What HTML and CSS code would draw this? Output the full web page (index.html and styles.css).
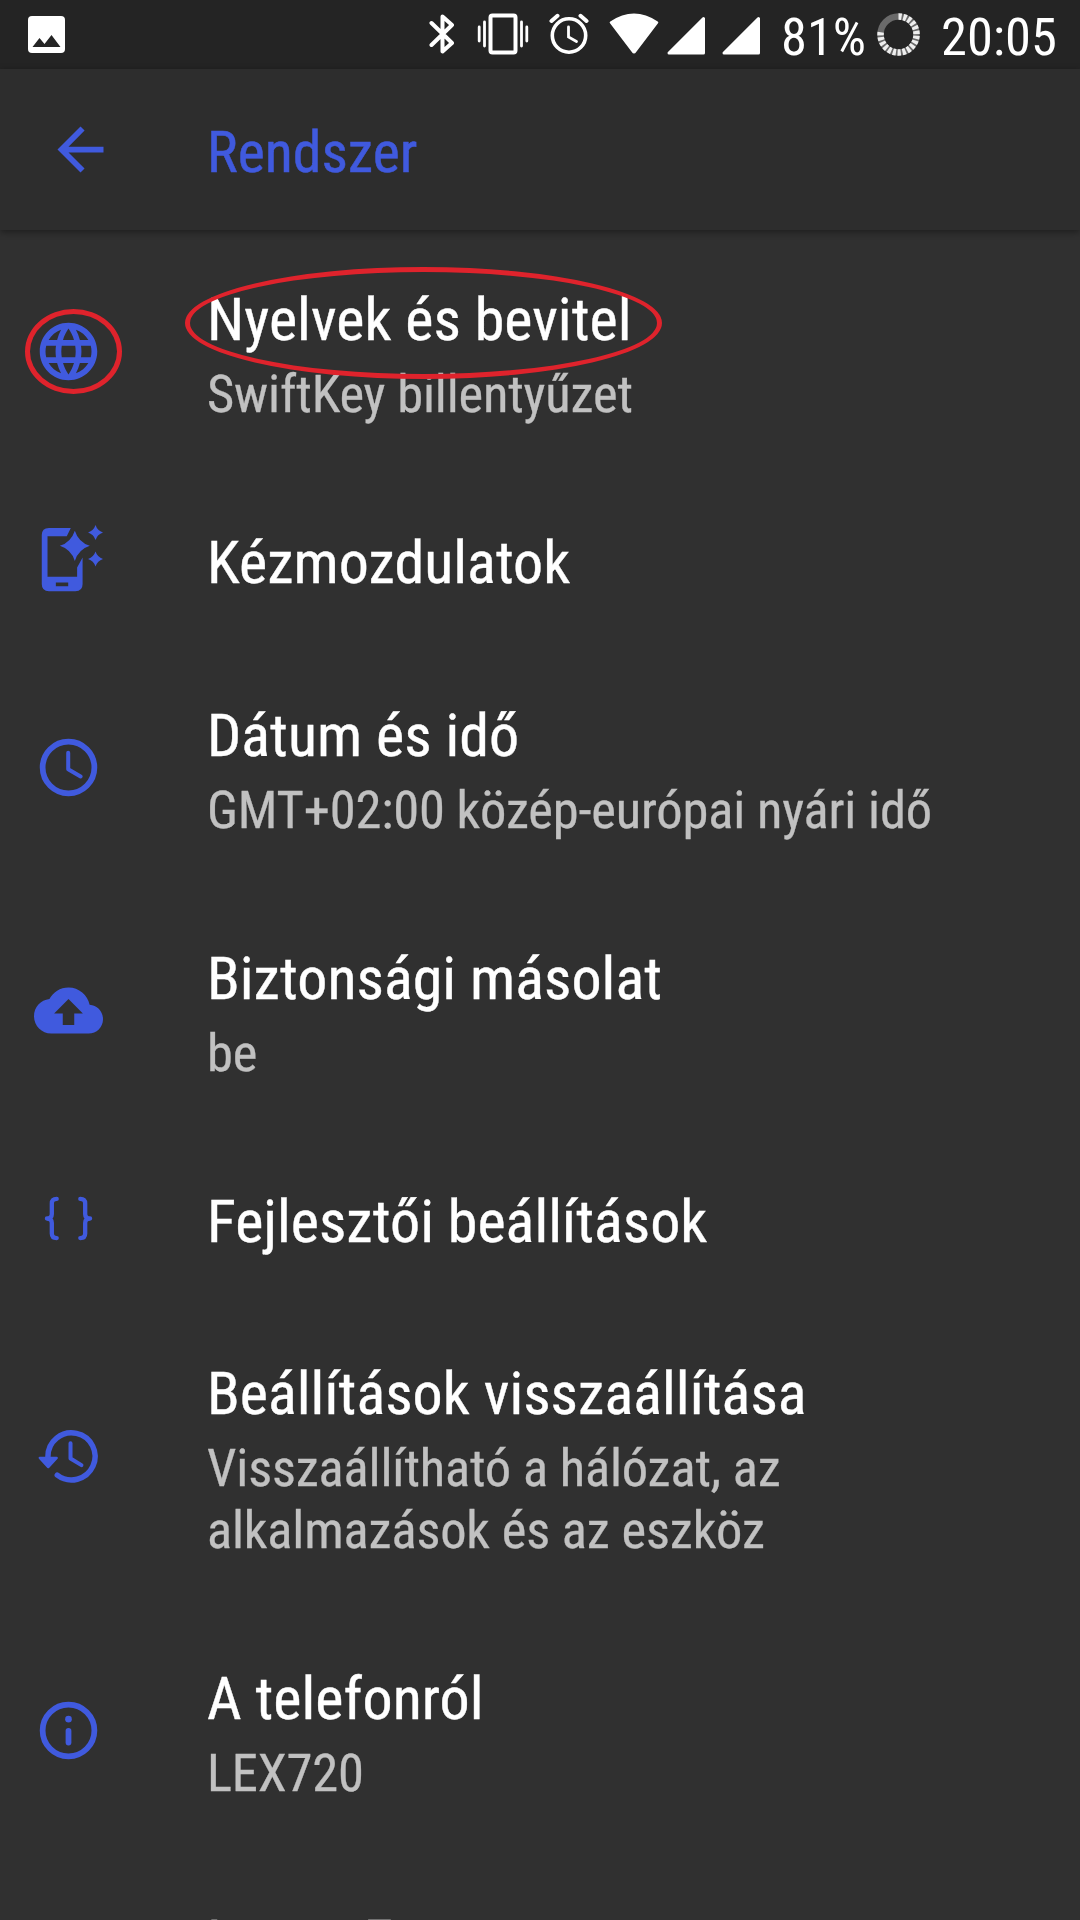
FILE: index.html
```
<!DOCTYPE html>
<html lang="hu">
<head>
  <meta charset="UTF-8" />
  <meta name="viewport" content="width=device-width, initial-scale=1.0"/>
  <title>Rendszer</title>
  <link rel="stylesheet" href="styles.css">
</head>
<body>
  <div class="statusbar">
    <svg class="st-photo" width="37" height="37" viewBox="0 0 37 37">
      <rect width="37" height="37" rx="4" fill="#fff"/>
      <path d="M4.5 31L11.5 22L16.5 28L23.5 19L32.5 31Z" fill="#242424"/>
    </svg>

    <svg class="st-bt" width="26" height="42" viewBox="0 0 26 42" fill="none" stroke="#fff" stroke-width="4" stroke-linejoin="round" stroke-linecap="round">
      <path d="M2.5 10L23 30L13.5 38.5V3.5L23 12L2.5 32"/>
    </svg>
    <svg class="st-vib" width="52" height="42" viewBox="0 0 52 42" fill="none" stroke="#fff" stroke-linecap="round">
      <rect x="13.5" y="2.5" width="25" height="37" rx="2" stroke-width="4"/>
      <path d="M2.2 14V28M7.5 9V33M44.5 9V33M49.8 14V28" stroke-width="2.8"/>
    </svg>
    <svg class="st-alarm" width="40" height="42" viewBox="0 0 40 42" fill="none" stroke="#fff" stroke-linecap="round">
      <circle cx="20" cy="22.5" r="16.7" stroke-width="3.6"/>
      <path d="M2.5 8L8.5 2.8M37.5 8L31.5 2.8" stroke-width="4"/>
      <path d="M19.5 14V24L27.5 28.5" stroke-width="2.8"/>
    </svg>
    <svg class="st-wifi" width="50" height="42" viewBox="0 0 50 42">
      <path d="M2 9.5Q25 -6 48 9.5L26 38.5Q25 40 24 38.5Z" fill="#fff" stroke="#fff" stroke-width="2.5" stroke-linejoin="round"/>
    </svg>
    <svg class="st-sig" width="38" height="42" viewBox="0 0 38 42">
      <path d="M2 40L36.5 5.5V40Z" fill="#fff" stroke="#fff" stroke-width="3" stroke-linejoin="round"/>
    </svg>
    <svg class="st-sig2" width="38" height="42" viewBox="0 0 38 42">
      <path d="M2 40L36.5 5.5V40Z" fill="#fff" stroke="#fff" stroke-width="3" stroke-linejoin="round"/>
    </svg>
    <span class="st-percent">81%</span>
    <svg class="st-batt" width="43" height="43" viewBox="0 0 43 43" fill="none" stroke-width="6.5">
      <circle cx="21.5" cy="21.5" r="18" stroke="#6a6a6a"/>
      <!-- 81% of the ring, clockwise from the top -->
      <path d="M21.5 3.5A18 18 0 1 1 3.8 18.5" stroke="#eee" stroke-dasharray="3.2 1.7"/>
    </svg>
    <span class="st-time">20:05</span>
  </div>

  <div class="header">
    <svg class="back" viewBox="0 0 24 24"><path d="M20 11H7.83l5.59-5.59L12 4l-8 8 8 8 1.41-1.41L7.83 13H20v-2z"/></svg>
    <div class="header-title">Rendszer</div>
  </div>

  <div class="list">
    <div class="row">
      <svg class="icon" viewBox="0 0 24 24"><path d="M11.99 2C6.47 2 2 6.48 2 12s4.47 10 9.99 10C17.52 22 22 17.52 22 12S17.52 2 11.99 2zm6.93 6h-2.95c-.32-1.25-.78-2.45-1.38-3.56 1.84.63 3.37 1.91 4.33 3.56zM12 4.04c.83 1.2 1.48 2.53 1.91 3.96h-3.82c.43-1.43 1.08-2.76 1.91-3.96zM4.26 14C4.1 13.36 4 12.69 4 12s.1-1.36.26-2h3.38c-.08.66-.14 1.32-.14 2 0 .68.06 1.34.14 2H4.26zm.82 2h2.95c.32 1.25.78 2.45 1.38 3.56-1.84-.63-3.37-1.9-4.33-3.56zm2.95-8H5.08c.96-1.66 2.49-2.93 4.33-3.56C8.81 5.55 8.35 6.75 8.03 8zM12 19.96c-.83-1.2-1.48-2.53-1.91-3.96h3.82c-.43 1.43-1.08 2.76-1.91 3.96zM14.34 14H9.66c-.09-.66-.16-1.32-.16-2 0-.68.07-1.35.16-2h4.68c.09.65.16 1.32.16 2 0 .68-.07 1.34-.16 2zm.25 5.56c.6-1.11 1.06-2.31 1.38-3.56h2.95c-.96 1.65-2.49 2.93-4.33 3.56zM16.36 14c.08-.66.14-1.32.14-2 0-.68-.06-1.34-.14-2h3.38c.16.64.26 1.31.26 2s-.1 1.36-.26 2h-3.38z"/></svg>
      <div class="text">
        <div class="title">Nyelvek és bevitel</div>
        <div class="summary">SwiftKey billentyűzet</div>
      </div>
      <div class="mark mark-icon"></div>
      <div class="mark mark-title"></div>
    </div>

    <div class="row">
      <svg class="icon" viewBox="0 0 24 24">
        <path fill-rule="evenodd" d="M12.8 1H5.2Q2.7 1 2.7 3.5V20.5Q2.7 23 5.2 23H14.4Q16.9 23 16.9 20.5V11.3L15 14.8V18H4.7V3.9H11.4ZM7.6 20H11.9V21.3H7.6Z"/>
        <path d="M14.2 2Q15.5 6 19.4 7.25Q15.5 8.5 14.2 12.5Q12.9 8.5 9 7.25Q12.9 6 14.2 2ZM21.4 0Q22.05 1.95 24 2.6Q22.05 3.25 21.4 5.2Q20.75 3.25 18.8 2.6Q20.75 1.95 21.4 0ZM21.4 9.2Q22.05 11.15 24 11.8Q22.05 12.45 21.4 14.4Q20.75 12.45 18.8 11.8Q20.75 11.15 21.4 9.2Z"/>
      </svg>
      <div class="text">
        <div class="title">Kézmozdulatok</div>
      </div>
    </div>

    <div class="row">
      <svg class="icon line" viewBox="0 0 24 24">
        <circle cx="12" cy="12" r="9" stroke-width="2"/>
        <path d="M11.9 6.9V12.6L16.2 15.1" stroke-width="1.4"/>
      </svg>
      <div class="text">
        <div class="title">Dátum és idő</div>
        <div class="summary">GMT+02:00 közép-európai nyári idő</div>
      </div>
    </div>

    <div class="row">
      <svg class="icon" viewBox="0 0 24 24"><path d="M19.35 10.04C18.67 6.59 15.64 4 12 4 9.11 4 6.6 5.64 5.35 8.04 2.34 8.36 0 10.91 0 14c0 3.31 2.69 6 6 6h13c2.76 0 5-2.24 5-5 0-2.64-2.05-4.78-4.65-4.96zM14 13v4h-4v-4H7l5-5 5 5h-3z"/></svg>
      <div class="text">
        <div class="title">Biztonsági másolat</div>
        <div class="summary">be</div>
      </div>
    </div>

    <div class="row">
      <svg class="icon line" viewBox="0 0 24 24">
        <path d="M7.9 5.2C6.7 5.2 6.2 5.8 6.2 6.8V10.4C6.2 11.4 5.6 12 4.5 12C5.6 12 6.2 12.6 6.2 13.6V17.2C6.2 18.2 6.7 18.8 7.9 18.8M16.1 5.2C17.3 5.2 17.8 5.8 17.8 6.8V10.4C17.8 11.4 18.4 12 19.5 12C18.4 12 17.8 12.6 17.8 13.6V17.2C17.8 18.2 17.3 18.8 16.1 18.8" stroke-width="1.5"/>
      </svg>
      <div class="text">
        <div class="title">Fejlesztői beállítások</div>
      </div>
    </div>

    <div class="row">
      <svg class="icon line" viewBox="0 0 24 24">
        <path d="M4.85 12.5V12A8.2 8.2 0 1 1 8.1 18.5" stroke-width="1.9"/>
        <path d="M2 12.5H7.9L4.95 15.7Z" stroke-width=".8" fill="#405ade"/>
        <path d="M12.7 7.4V12.7L16.5 15" stroke-width="1.4"/>
      </svg>
      <div class="text">
        <div class="title">Beállítások visszaállítása</div>
        <div class="summary">Visszaállítható a hálózat, az<br>alkalmazások és az eszköz</div>
      </div>
    </div>

    <div class="row">
      <svg class="icon line" viewBox="0 0 24 24">
        <circle cx="12" cy="12" r="9" stroke-width="2"/>
        <path d="M12 8.05V8.06" stroke-width="2.3"/>
        <path d="M12 12.1V16.2" stroke-width="2"/>
      </svg>
      <div class="text">
        <div class="title">A telefonról</div>
        <div class="summary">LEX720</div>
      </div>
    </div>

    <div class="row">
      <div class="icon"></div>
      <div class="text">
        <div class="title">Leeco F</div>
      </div>
    </div>
  </div>
</body>
</html>
```
FILE: styles.css
```
* {
  box-sizing: border-box;
}

body {
  margin: 0;
  width: 1080px;
  height: 1920px;
  overflow: hidden;
  background: #303030;
  color: #fff;
  font-family: "Roboto Condensed", Roboto, sans-serif;
  font-stretch: 75%;
}

svg {
  display: block;
  flex: none;
}

/* Status bar */
.statusbar {
  display: flex;
  align-items: flex-start;
  height: 69px;
  padding: 13px 0 0 28px;
  background: #242424;
  font-size: 52.5px;
  line-height: 48px;
}

.st-photo {
  margin-top: 3px;
}

.st-bt {
  margin-left: 364px;
}

.st-vib {
  margin-left: 22px;
}

.st-alarm {
  margin-left: 20px;
}

.st-wifi {
  margin-left: 20px;
}

.st-sig {
  margin-left: 8px;
}

.st-sig2 {
  margin-left: 17px;
}

.st-percent {
  width: 96px;
  margin-left: 21px;
}

.st-time {
  margin-left: 21px;
}

/* Header */
.header {
  display: flex;
  align-items: center;
  height: 161px;
  padding-left: 46px;
  background: #2d2d2d;
  box-shadow: 0 2px 7px rgba(0, 0, 0, 0.4);
}

.back {
  width: 69px;
  height: 69px;
  fill: #405ade;
}

.header-title {
  margin-left: 92px;
  padding-top: 4px;
  color: #405ade;
  font-size: 57.8px;
  -webkit-text-stroke: 0.5px #405ade;
}

/* Settings list */
.list {
  padding-top: 0.4px;
}

.row {
  position: relative;
  display: flex;
  align-items: center;
  padding-left: 34px;
}

.icon {
  width: 69px;
  height: 69px;
  flex: none;
  fill: #405ade;
}

.line {
  fill: none;
  stroke: #405ade;
  stroke-linecap: round;
  stroke-linejoin: round;
}

.text {
  margin-left: 104px;
  padding: 54.8px 0 47.5px;
}

.title {
  font-size: 60px;
  line-height: 70.4px;
  letter-spacing: 0.05px;
  white-space: nowrap;
  -webkit-text-stroke: 0.4px #fff;
}

.summary {
  margin-top: 8.7px;
  color: #c1c1c1;
  font-size: 52.5px;
  line-height: 61.5px;
  letter-spacing: -0.17px;
  white-space: nowrap;
  -webkit-text-stroke: 0.3px #c1c1c1;
}

/* Red ellipses drawn around the first entry */
.mark {
  position: absolute;
  border: 5px solid #df232c;
  border-radius: 50%;
}

.mark-icon {
  left: 25px;
  top: 79px;
  width: 97px;
  height: 85px;
}

.mark-title {
  left: 185px;
  top: 37px;
  width: 477px;
  height: 112px;
}
```
